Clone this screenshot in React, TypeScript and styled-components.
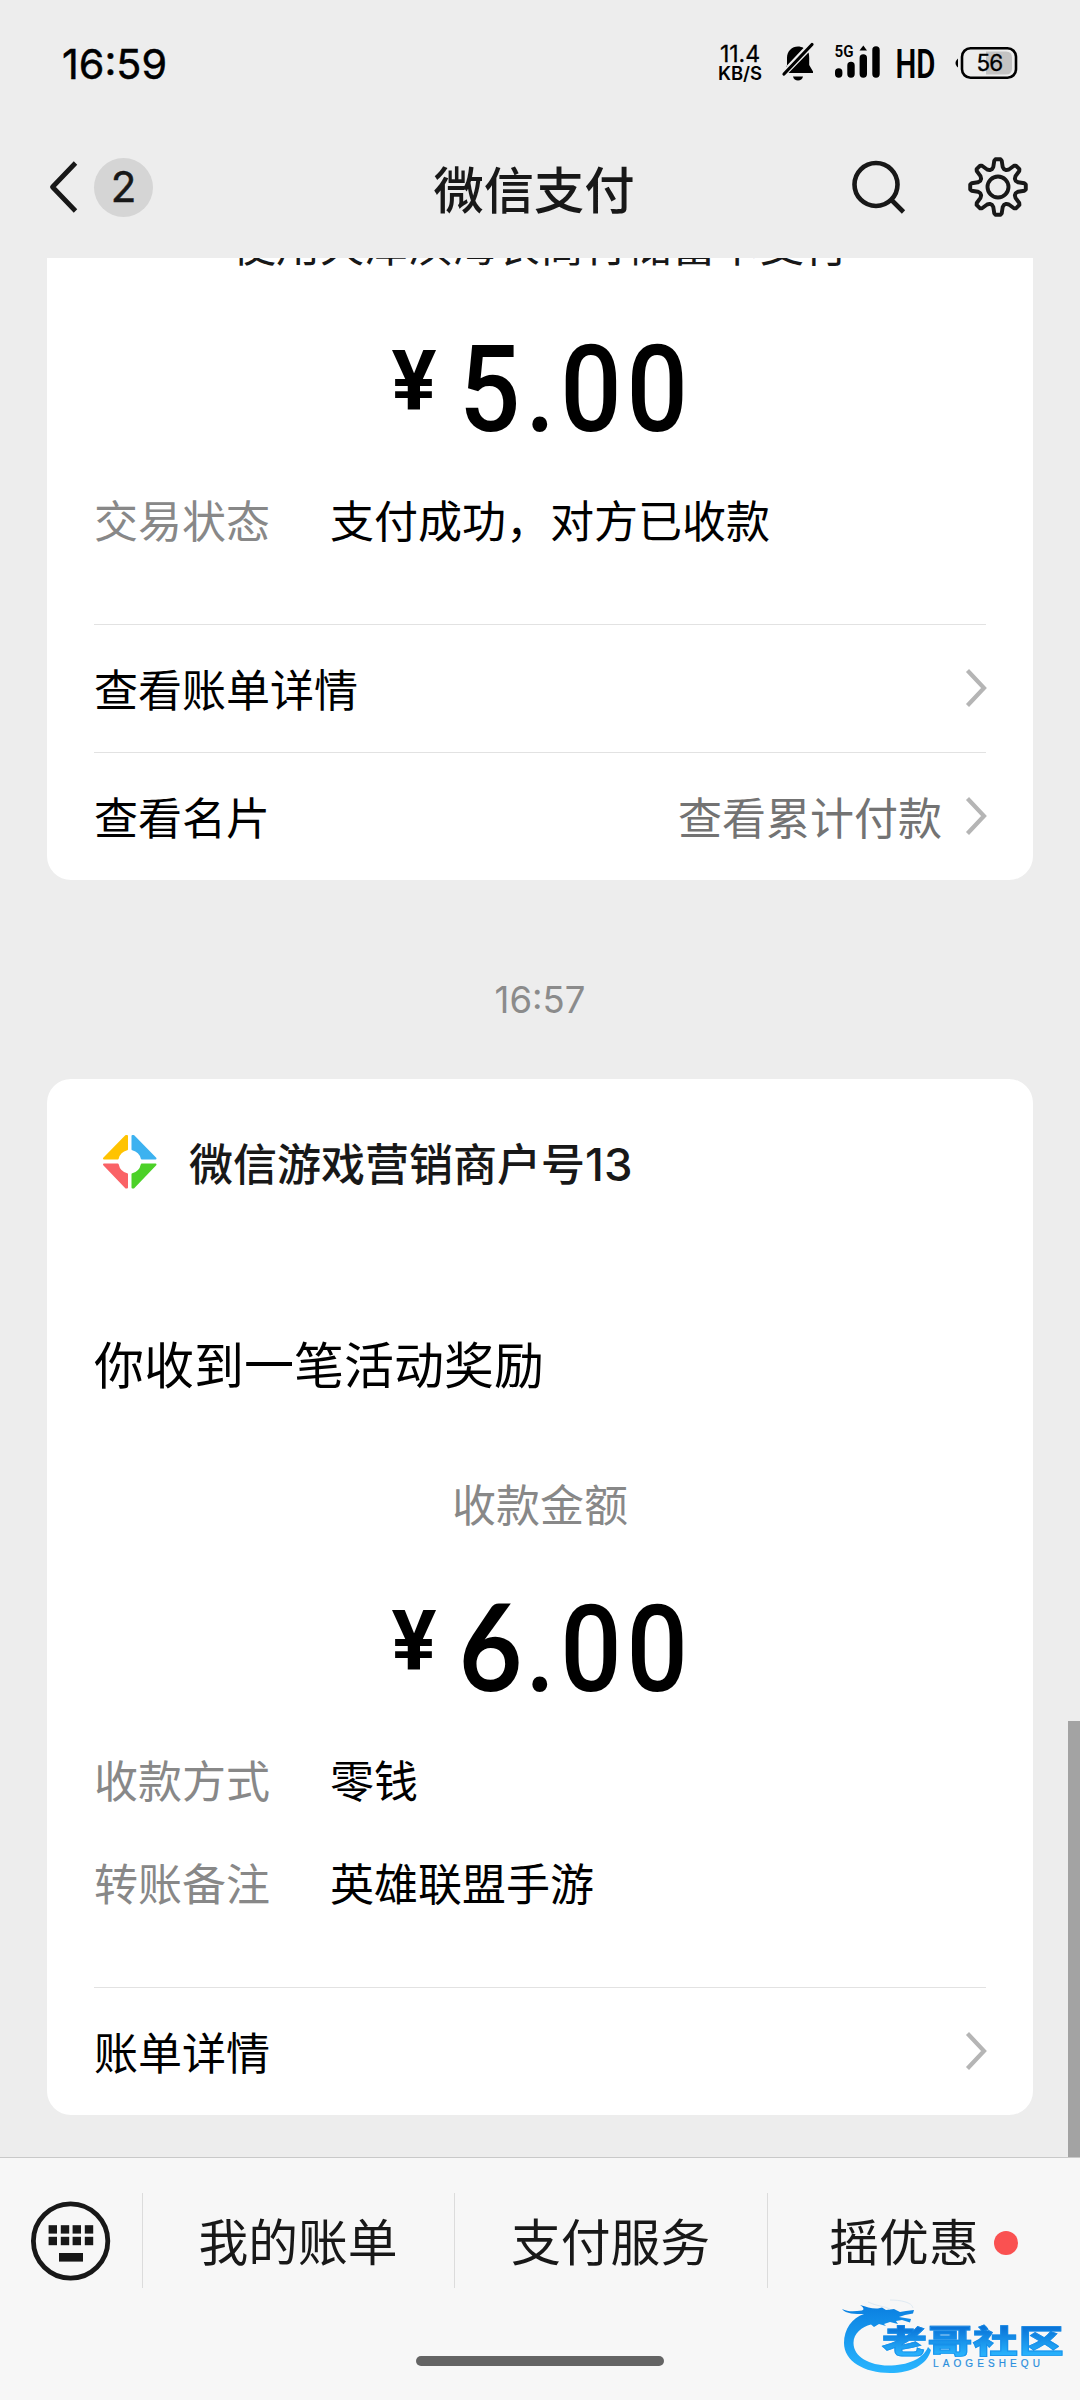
import React from "react";
import styled, { createGlobalStyle } from "styled-components";

const CJK = `"Noto Sans CJK SC", sans-serif`;
const LATIN = `Inter, "Noto Sans CJK SC", sans-serif`;

const GlobalStyle = createGlobalStyle`
  * { box-sizing: border-box; }
  body { margin: 0; background: #ededed; font-family: ${CJK}; }
  svg { display: block; flex: none; overflow: visible; }
`;

const Screen = styled.div`
  width: 1080px;
  height: 2400px;
  display: flex;
  flex-direction: column;
  background: #ededed;
  overflow: hidden;
  white-space: nowrap;
`;

const StatusBar = styled.div`
  height: 126px;
  flex: none;
  display: flex;
  justify-content: space-between;
  align-items: center;
  padding: 0 62px 0 62px;
  color: #000;
  font-family: ${LATIN};
`;

const Clock = styled.div`
  margin-top: 1px;
  font-size: 41.3px;
  font-weight: 400;
  -webkit-text-stroke: 0.5px #000;
`;

const StatusIcons = styled.div`
  display: flex;
  align-items: center;
`;

const NetSpeed = styled.div`
  width: 46px;
  margin-right: 19px;
  display: flex;
  flex-direction: column;
  align-items: center;
`;

const SpeedValue = styled.span`
  font-size: 23px;
  line-height: 19px;
  font-weight: 400;
  -webkit-text-stroke: 0.3px #000;
`;

const SpeedUnit = styled.span`
  font-size: 18.5px;
  line-height: 18px;
  font-weight: 600;
`;

const NavBar = styled.div`
  height: 132px;
  flex: none;
  display: grid;
  grid-template-columns: 1fr auto 1fr;
  align-items: center;
  padding: 0 52px 10px 49px;
  color: #181818;
`;

const NavBack = styled.div`
  display: flex;
  align-items: center;
  gap: 16px;
`;

const UnreadBadge = styled.div`
  width: 59px;
  height: 59px;
  border-radius: 50%;
  background: #d5d5d5;
  font: 400 42px/58px ${LATIN};
  -webkit-text-stroke: 0.5px #181818;
  text-align: center;
`;

const NavTitle = styled.div`
  font-size: 50.3px;
  line-height: 60px;
  font-weight: 500;
  margin-right: 9px;
`;

const NavActions = styled.div`
  display: flex;
  align-items: center;
  justify-content: flex-end;
  gap: 63px;
`;

const Feed = styled.main`
  position: relative;
  height: 1899px;
  flex: none;
  overflow: hidden;
  padding: 0 47px;
`;

const ScrollThumb = styled.div`
  position: absolute;
  right: 0;
  bottom: 0;
  width: 12px;
  height: 436px;
  background: #a3a3a3;
`;

const Card = styled.section<{ $clipped?: boolean }>`
  display: flex;
  flex-direction: column;
  margin-top: ${(p) => (p.$clipped ? "-45px" : "0")};
  padding: 0 47px;
  background: #fff;
  border-radius: 24px;
`;

const CardHeader = styled.header`
  height: 71px;
  margin: 47px 0 130px;
  display: flex;
  align-items: center;
  gap: 24px;
  font: 500 44px/60px ${CJK};
  color: #181818;
`;

const HeaderName = styled.span`
  padding-top: 1px;
`;

const Digits = styled.span`
  font-family: ${LATIN};
  font-size: 45.5px;
  line-height: 1;
`;

const Headline = styled.div`
  font-size: 50px;
  line-height: 70px;
  margin-bottom: 76px;
  color: #000;
`;

const Caption = styled.div<{ $tone?: string }>`
  font-size: 44px;
  line-height: 60px;
  text-align: center;
  color: ${(p) => p.$tone ?? "#888"};
`;

const Amount = styled.div`
  height: 120px;
  margin: 57px 0 39px;
  padding-left: 4px;
  display: flex;
  justify-content: center;
  font: 500 120px/120px Roboto, sans-serif;
  color: #000;
`;

const Currency = styled.span`
  font-size: 84px;
  line-height: 103px;
  font-weight: 700;
  margin-right: 22px;
`;

const Figure = styled.span`
  letter-spacing: 5.5px;
  margin-right: -26px;
  transform: scaleX(0.9);
  transform-origin: 0 0;
`;

const StraightSix = styled.span`
  font: 700 121px/0 Lato, Roboto, sans-serif;
  letter-spacing: 3.5px;
`;

const Details = styled.div`
  display: flex;
  flex-direction: column;
  gap: 43px;
  margin-bottom: 75px;
`;

const DetailRow = styled.div`
  display: flex;
  gap: 60px;
  font-size: 44px;
  line-height: 60px;
  color: #000;
`;

const DetailLabel = styled.span`
  color: #888;
`;

const LinkRow = styled.div`
  height: 128px;
  padding-bottom: 2px;
  border-top: 1px solid #e2e2e2;
  display: flex;
  align-items: center;
  justify-content: space-between;
  font-size: 44px;
  line-height: 60px;
  color: #000;
`;

const LinkNote = styled.span`
  margin-left: auto;
  margin-right: 24px;
  color: #737373;
`;

const Timestamp = styled.div`
  height: 199px;
  padding-top: 40px;
  display: flex;
  align-items: center;
  justify-content: center;
  font: 400 36.5px/50px ${LATIN};
  color: #8b8b8b;
`;

const Footer = styled.footer`
  position: relative;
  height: 243px;
  flex: none;
  display: flex;
  flex-direction: column;
  align-items: center;
  background: #f7f7f7;
  border-top: 1px solid #c9c9c9;
`;

const MenuBar = styled.nav`
  width: 100%;
  height: 95px;
  margin: 35px 0 68px;
  display: grid;
  grid-template-columns: 142px 312px 313px 1fr;
`;

const KeyboardButton = styled.div`
  display: flex;
  align-items: center;
  justify-content: center;
`;

const MenuItem = styled.div`
  border-left: 1px solid #dcdcdc;
  padding: 0 1px 3px 0;
  display: flex;
  align-items: center;
  justify-content: center;
  gap: 15px;
  font-size: 49.8px;
  line-height: 60px;
  color: #181818;
`;

const RedDot = styled.i`
  width: 24px;
  height: 24px;
  margin-top: 8px;
  border-radius: 50%;
  background: #fa5151;
`;

const HomeBar = styled.div`
  width: 248px;
  height: 10px;
  margin-right: 1px;
  border-radius: 5px;
  background: #646464;
`;

const Watermark = styled.div`
  position: absolute;
  left: 840px;
  top: 140px;
  width: 230px;
  height: 76px;
`;

const WatermarkName = styled.div`
  position: absolute;
  left: 42px;
  top: 24px;
  font: 900 33px/36px ${CJK};
  letter-spacing: 0.5px;
  transform: scale(1.36, 0.96);
  transform-origin: 0 50%;
  color: transparent;
  background: linear-gradient(#0a74d8 15%, #27b0fb 90%);
  background-clip: text;
  -webkit-background-clip: text;
  -webkit-text-stroke: 0.9px rgba(20, 140, 232, 0.7);
`;

const WatermarkLatin = styled.div`
  position: absolute;
  left: 93px;
  top: 60px;
  font: 400 10px/12px "Liberation Sans", sans-serif;
  letter-spacing: 4.1px;
  color: #2b8fdd;
  -webkit-text-stroke: 0.2px #2b8fdd;
`;

const Gap = styled.span<{ $w: number }>`
  width: ${(p) => p.$w}px;
`;

const Chevron = () => (
  <svg width="20" height="40" viewBox="0 0 20 40" fill="none" stroke="#b5b5b5" strokeWidth="4.2">
    <path d="M1.5 2.5 18 20 1.5 37.5" />
  </svg>
);

const MutedBell = () => (
  <svg width="32" height="40" viewBox="0 0 32 40">
    <path d="M5 24V15C5 8 10 3.500 16 3.500C18 3.500 20 4 21.500 5L4.500 23Z" fill="#000" />
    <path d="M8 28.500 26.500 9.500C27 11 27.200 13 27.200 15V22L31 28.500V30H6.500Z" fill="#000" />
    <path d="M11 33.500H21C20.500 36 18.500 37.500 16 37.500S11.500 36 11 33.500Z" fill="#000" />
    <path d="M2 31 30 1.500" stroke="#000" strokeWidth="3.200" strokeLinecap="round" />
  </svg>
);

const Signal = () => (
  <svg width="46" height="36" viewBox="0 0 46 36">
    <g stroke="#000" strokeWidth="7.400" strokeLinecap="round">
      <path d="M4.700 27V29M17 20.500V29M29.300 13V29M42 5V29" />
    </g>
    <path d="M25.500 5.500 29.300 0.500 33 5.500Z" fill="#000" />
    <text x="0.500" y="12" fontFamily="Roboto, sans-serif" fontSize="16" fontWeight="600" textLength="19" lengthAdjust="spacingAndGlyphs">5G</text>
  </svg>
);

const HdMark = () => (
  <svg width="40" height="32" viewBox="0 0 40 32">
    <text x="-0.500" y="31" fontFamily="Roboto, sans-serif" fontSize="41" fontWeight="600" textLength="40" lengthAdjust="spacingAndGlyphs">HD</text>
  </svg>
);

const Battery = () => (
  <svg width="63" height="34" viewBox="0 0 63 34">
    <path d="M3 12.500C1.300 14 0.500 15.500 0.500 17S1.300 20 3 21.500Z" fill="#000" />
    <path d="M31 5.500H51Q57 5.500 57 11.500V22.500Q57 28.500 51 28.500H31Z" fill="#c3c3c3" />
    <rect x="7" y="2.300" width="54" height="29.400" rx="8.500" fill="none" stroke="#000" strokeWidth="2.600" />
    <text x="34.500" y="25.300" textAnchor="middle" fontFamily="Inter, sans-serif" fontSize="22.500" fontWeight="400" letterSpacing="-0.800" stroke="#000" strokeWidth="0.300">56</text>
  </svg>
);

const BackArrow = () => (
  <svg width="29" height="52" viewBox="0 0 29 52" fill="none" stroke="#181818" strokeWidth="4.800">
    <path d="M26.500 2 3.500 26 26.500 50" strokeLinejoin="round" />
  </svg>
);

const SearchIcon = () => (
  <svg width="53" height="54" viewBox="0 0 53 54" fill="none" stroke="#181818" strokeWidth="4.600">
    <circle cx="24" cy="24.500" r="21.500" />
    <path d="M39 39.500 51.500 52" />
  </svg>
);

/* Eight teeth: each one steps out from the rim, runs across its tip and steps back. */
const toothPath = () => {
  const steps: string[] = [];
  for (let i = 0; i < 8; i += 1) {
    const base = (i * Math.PI) / 4 - Math.PI / 2;
    const points: Array<[number, number]> = [
      [18.8, -0.33],
      [20.6, -0.23],
      [26.6, -0.14],
      [27.9, -0.09],
      [27.9, 0.09],
      [26.6, 0.14],
      [20.6, 0.23],
      [18.8, 0.33],
    ];
    points.forEach(([radius, offset]) => {
      const x = 30 + radius * Math.cos(base + offset);
      const y = 30 + radius * Math.sin(base + offset);
      steps.push(`${steps.length ? "L" : "M"}${x.toFixed(2)} ${y.toFixed(2)}`);
    });
  }
  return `${steps.join("")}Z`;
};

const GearIcon = () => (
  <svg width="60" height="60" viewBox="0 0 60 60" fill="none" stroke="#181818" strokeWidth="3.900" strokeLinejoin="round">
    <path d={toothPath()} />
    <circle cx="30" cy="30" r="10.500" />
  </svg>
);

const GameLogo = () => (
  <svg width="71" height="71" viewBox="0 0 71 71">
    <g strokeWidth="2" strokeLinejoin="round">
      <path d="M33 10V23.300A12.500 12.500 0 0 0 23.700 32.500H10L32 10Z" fill="#ffc300" stroke="#ffc300" />
      <path d="M38.500 10V23.300A12.500 12.500 0 0 1 47.800 32.500H61.500L39.500 10Z" fill="#3db2f0" stroke="#3db2f0" />
      <path d="M33 61.500V48.200A12.500 12.500 0 0 1 23.700 38.500H10L32 61.500Z" fill="#fa6266" stroke="#fa6266" />
      <path d="M38.500 61.500V48.200A12.500 12.500 0 0 0 47.800 38.500H61.500L39.500 61.500Z" fill="#4cd128" stroke="#4cd128" />
    </g>
  </svg>
);

const KeyboardIcon = () => (
  <svg width="80" height="80" viewBox="0 0 80 80" fill="#181818">
    <circle cx="39.600" cy="40" r="37.200" fill="none" stroke="#181818" strokeWidth="4.800" />
    {[24.2, 35.8].map((y) => [17.6, 29.8, 41.6, 53.8].map((x) => <rect key={`${x}-${y}`} x={x} y={y} width="8.400" height="8.400" />))}
    <rect x="28" y="52" width="24" height="8.600" />
  </svg>
);

const Dragon = () => (
  <svg width="100" height="80" viewBox="0 0 100 80">
    <defs>
      <linearGradient id="body" x1="0" y1="0" x2="0" y2="1">
        <stop offset="0" stopColor="#0a7fe0" />
        <stop offset="1" stopColor="#29b6ff" />
      </linearGradient>
    </defs>
    <path
      d="M2 11C8 14 14 13.500 22 12.500C25 11.500 23 9 20 7C27 9 32 11 38 10.500L42 9.500L46 12L54 11L60 14L66 13L74 12L73 15.500L65 17L59 19L71 21L70 24.500L62 22L56 23L58 26L50 24L44 26L46 28L39 26L34 29L31 26.500C22 29 13.500 35 13.500 45C13.500 59 30 67.500 48 67.500C68 67.500 83 61 88 49L91 52C87 67 71 75 50 75C24 75 4 63 4 45C4 31 12 20 24 16C15 16 6 16 2 11Z"
      fill="url(#body)"
    />
    <path d="M28 4C36 8 44 8 50 11M50 2C60 2 72 4 73 10" fill="none" stroke="#dfeaf3" strokeWidth="1" />
  </svg>
);

export default function App() {
  return (
    <>
      <GlobalStyle />
      <Screen>
        <StatusBar>
          <Clock>16:59</Clock>
          <StatusIcons>
            <NetSpeed>
              <SpeedValue>11.4</SpeedValue>
              <SpeedUnit>KB/S</SpeedUnit>
            </NetSpeed>
            <MutedBell />
            <Gap $w={20} />
            <Signal />
            <Gap $w={16} />
            <HdMark />
            <Gap $w={19} />
            <Battery />
          </StatusIcons>
        </StatusBar>

        <NavBar>
          <NavBack>
            <BackArrow />
            <UnreadBadge>2</UnreadBadge>
          </NavBack>
          <NavTitle>微信支付</NavTitle>
          <NavActions>
            <SearchIcon />
            <GearIcon />
          </NavActions>
        </NavBar>

        <Feed>
          <Card $clipped>
            <Caption $tone="#181818">使用天津滨海农商行储蓄卡支付</Caption>
            <Amount>
              <Currency>¥</Currency>
              <Figure>5.00</Figure>
            </Amount>
            <Details>
              <DetailRow>
                <DetailLabel>交易状态</DetailLabel>
                <span>支付成功，对方已收款</span>
              </DetailRow>
            </Details>
            <LinkRow>
              查看账单详情
              <Chevron />
            </LinkRow>
            <LinkRow>
              查看名片
              <LinkNote>查看累计付款</LinkNote>
              <Chevron />
            </LinkRow>
          </Card>

          <Timestamp>16:57</Timestamp>

          <Card>
            <CardHeader>
              <GameLogo />
              <HeaderName>
                微信游戏营销商户号<Digits>13</Digits>
              </HeaderName>
            </CardHeader>
            <Headline>你收到一笔活动奖励</Headline>
            <Caption>收款金额</Caption>
            <Amount>
              <Currency>¥</Currency>
              <Figure>
                <StraightSix>6</StraightSix>.00
              </Figure>
            </Amount>
            <Details>
              <DetailRow>
                <DetailLabel>收款方式</DetailLabel>
                <span>零钱</span>
              </DetailRow>
              <DetailRow>
                <DetailLabel>转账备注</DetailLabel>
                <span>英雄联盟手游</span>
              </DetailRow>
            </Details>
            <LinkRow>
              账单详情
              <Chevron />
            </LinkRow>
          </Card>
          <ScrollThumb />
        </Feed>

        <Footer>
          <MenuBar>
            <KeyboardButton>
              <KeyboardIcon />
            </KeyboardButton>
            <MenuItem>我的账单</MenuItem>
            <MenuItem>支付服务</MenuItem>
            <MenuItem>
              摇优惠
              <RedDot />
            </MenuItem>
          </MenuBar>
          <HomeBar />
          <Watermark>
            <Dragon />
            <WatermarkName>老哥社区</WatermarkName>
            <WatermarkLatin>LAOGESHEQU</WatermarkLatin>
          </Watermark>
        </Footer>
      </Screen>
    </>
  );
}
